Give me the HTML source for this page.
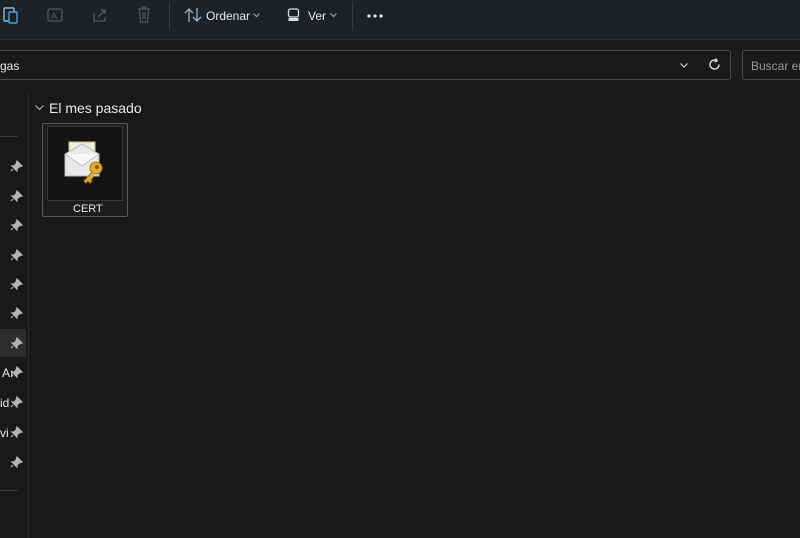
<!DOCTYPE html>
<html><head><style>
body{margin:0;width:800px;height:538px;overflow:hidden;background:#191919;font-family:"Liberation Sans",sans-serif;color:#e8e8e8;position:relative}
.tb{position:absolute;left:0;top:0;width:800px;height:39px;background:#1c2226;border-bottom:1px solid #2a2e31}
.ab{position:absolute;left:0;top:40px;width:800px;height:51px;background:#1b1b1b}
.box{position:absolute;top:50px;height:30px;border:1px solid #4a4a4a;border-radius:3px;background:#191919;box-sizing:border-box}
.sep{position:absolute;top:2px;width:1px;height:28px;background:#333a3e}
.t{position:absolute;font-size:12px;white-space:nowrap}
</style></head><body>
<div class="tb">
<svg style="position:absolute;left:3px;top:6px" width="16" height="18" viewBox="0 0 16 18"><rect x="1" y="2" width="10" height="13" rx="1" fill="none" stroke="#8fb6d8" stroke-width="1.4"/><rect x="6" y="6" width="8" height="11" rx="1" fill="#1c2226" stroke="#4aa0e0" stroke-width="1.4"/></svg>
<svg style="position:absolute;left:47px;top:7px" width="17" height="16"><rect x="1" y="2" width="14" height="12" rx="2" fill="none" stroke="#4c5a64" stroke-width="1.3"/><text x="4" y="12" font-size="9" fill="#4c5a64">A</text></svg>
<svg style="position:absolute;left:92px;top:7px" width="16" height="16"><path d="M2 6v8h11v-4M6 10l7-7M9 3h4v4" fill="none" stroke="#4c5a64" stroke-width="1.3"/></svg>
<svg style="position:absolute;left:137px;top:6px" width="14" height="17"><path d="M1 3h12M5 3V1h4v2M2.5 3l1 13h7l1-13M6 6v7M8 6v7" fill="none" stroke="#4c5a64" stroke-width="1.2"/></svg>
<div class="sep" style="left:169px"></div>
<svg style="position:absolute;left:184px;top:7px" width="18" height="16"><path d="M5 15V2M1 6l4-4 4 4M13 1v13M9 10l4 4 4-4" fill="none" stroke="#8fb6d8" stroke-width="1.3"/></svg>
<div class="t" style="left:206px;top:9px;color:#e8e8e8">Ordenar</div>
<svg style="position:absolute;left:253px;top:13px" width="7" height="5"><path d="M0.5 0.5l3 3 3-3" fill="none" stroke="#aaa"/></svg>
<svg style="position:absolute;left:287px;top:8px" width="13" height="14"><rect x="1.5" y="1" width="10" height="8" rx="2" fill="none" stroke="#ddd" stroke-width="1.3"/><rect x="1.5" y="10" width="10" height="3" fill="#ddd"/></svg>
<div class="t" style="left:308px;top:9px">Ver</div>
<svg style="position:absolute;left:330px;top:13px" width="7" height="5"><path d="M0.5 0.5l3 3 3-3" fill="none" stroke="#aaa"/></svg>
<div class="sep" style="left:352px"></div>
<svg style="position:absolute;left:367px;top:14px" width="16" height="4"><circle cx="2" cy="2" r="1.6" fill="#e8e8e8"/><circle cx="8" cy="2" r="1.6" fill="#e8e8e8"/><circle cx="14" cy="2" r="1.6" fill="#e8e8e8"/></svg>
</div>
<div class="ab"></div>
<div class="box" style="left:-2px;width:733px"></div>
<div class="t" style="left:0;top:59px">gas</div>
<svg style="position:absolute;left:680px;top:63px" width="8" height="5"><path d="M0.5 0.5l3.5 3.5 3.5-3.5" fill="none" stroke="#ccc" stroke-width="1.2"/></svg>
<svg style="position:absolute;left:708px;top:58px" width="13" height="13"><path d="M11 6.5A4.5 4.5 0 1 1 8.5 2.5M8 0.5l1 2.5-2.5 1" fill="none" stroke="#ddd" stroke-width="1.4"/></svg>
<div class="box" style="left:742px;width:70px"></div>
<div class="t" style="left:751px;top:59px;color:#9a9a9a">Buscar en</div>
<div style="position:absolute;left:28px;top:91px;width:1px;height:447px;background:#2b2b2b"></div>
<div style="position:absolute;left:0;top:136px;width:18px;height:1px;background:#3a3a3a"></div>
<div style="position:absolute;left:0;top:490px;width:18px;height:1px;background:#3a3a3a"></div>
<div style="position:absolute;left:0;top:329px;width:26px;height:28px;background:#2d2d2d"></div>
<div class="t" style="left:2px;top:366px">Aı</div>
<div class="t" style="left:0;top:396px">id</div>
<div class="t" style="left:0;top:426px">vi</div>
<svg style="position:absolute;left:0;top:0" width="30" height="538" fill="#aeb4b8" stroke="#aeb4b8">
<g stroke-width="1.2">
<path d="M17 161l5 5-3 1-2 2v2l-5-5h2l2-2zM13 169l-2 2"/>
<path d="M17 191l5 5-3 1-2 2v2l-5-5h2l2-2zM13 199l-2 2"/>
<path d="M17 220l5 5-3 1-2 2v2l-5-5h2l2-2zM13 228l-2 2"/>
<path d="M17 250l5 5-3 1-2 2v2l-5-5h2l2-2zM13 258l-2 2"/>
<path d="M17 279l5 5-3 1-2 2v2l-5-5h2l2-2zM13 287l-2 2"/>
<path d="M17 308l5 5-3 1-2 2v2l-5-5h2l2-2zM13 316l-2 2"/>
<path d="M17 338l5 5-3 1-2 2v2l-5-5h2l2-2zM13 346l-2 2"/>
<path d="M17 367l5 5-3 1-2 2v2l-5-5h2l2-2zM13 375l-2 2"/>
<path d="M17 397l5 5-3 1-2 2v2l-5-5h2l2-2zM13 405l-2 2"/>
<path d="M17 427l5 5-3 1-2 2v2l-5-5h2l2-2zM13 435l-2 2"/>
<path d="M17 457l5 5-3 1-2 2v2l-5-5h2l2-2zM13 465l-2 2"/>
</g></svg>
<svg style="position:absolute;left:35px;top:105px" width="9" height="6"><path d="M0.5 0.5l4 4 4-4" fill="none" stroke="#bbb" stroke-width="1.1"/></svg>
<div class="t" style="left:49px;top:100px;font-size:14px">El mes pasado</div>
<div style="position:absolute;left:42px;top:123px;width:86px;height:94px;border:1px solid #5a5a5a;box-sizing:border-box;border-radius:2px;background:#1d1d1d"></div>
<div style="position:absolute;left:47px;top:126px;width:76px;height:75px;border:1px solid #3a3a3a;box-sizing:border-box;background:#141414"></div>
<svg style="position:absolute;left:62px;top:140px" width="46" height="46" viewBox="0 0 46 46">
<rect x="7" y="2" width="26" height="20" fill="#f3ecd7" stroke="#c9bf9f"/>
<path d="M3 14l17-10 17 10v22H3z" fill="#e9e9e9" stroke="#b8b8b8"/>
<path d="M3 14l17 12 17-12" fill="#f7f7f7" stroke="#c0c0c0"/>
<circle cx="34" cy="28" r="6" fill="#e2a92c" stroke="#a6741a"/>
<path d="M30 32l-8 9 2 2 2-2 2 2 2-2-1-1 3-4" fill="#e2a92c" stroke="#a6741a"/>
<circle cx="35" cy="27" r="2" fill="#8a5c14"/>
</svg>
<div class="t" style="left:73px;top:203px;font-size:11px">CERT</div>
</body></html>
